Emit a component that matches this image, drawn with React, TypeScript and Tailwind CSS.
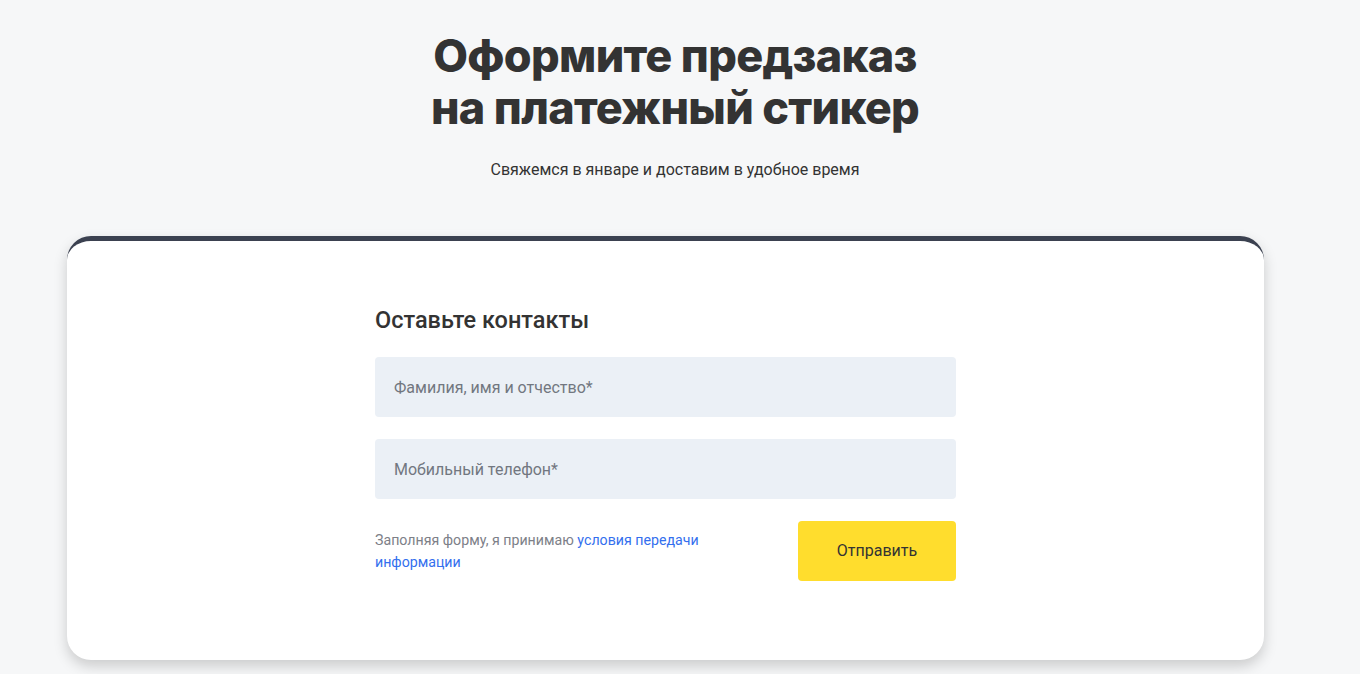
export default function App() {
  return (
    <div className="min-h-screen bg-[#f6f7f8] font-['Roboto','Noto_Sans',sans-serif] text-[#333333]">
      <div className="flex flex-col items-center pt-[30px] pr-[10px]">
        <h1 className="text-center font-['Inter','Noto_Sans',sans-serif] text-[45px] font-extrabold leading-[52px] tracking-[-0.7px] text-[#333333]">
          Оформите предзаказ
          <br />
          на платежный стикер
        </h1>
        <p className="mt-[24px] text-[16px] leading-[24px] text-[#333333]">
          Свяжемся в январе и доставим в удобное время
        </p>
      </div>

      <div className="ml-[67px] mt-[54px] w-[1197px] rounded-[24px] border-t-[5px] border-[#3b4150] bg-white shadow-[0_6px_14px_rgba(0,0,0,0.18)]">
        <div className="mx-auto w-[581px] pt-[65px] pb-[79px]">
          <h2 className="text-[23.5px] font-medium leading-[29px] text-[#333333]">Оставьте контакты</h2>

          <div className="mt-[22px] flex flex-col gap-[22px]">
            <input
              placeholder="Фамилия, имя и отчество*"
              className="h-[60px] w-full rounded-[4px] bg-[#ebf0f6] px-[19px] text-[16px] text-[#333333] outline-none placeholder:text-[#727780]"
            />
            <input
              placeholder="Мобильный телефон*"
              className="h-[60px] w-full rounded-[4px] bg-[#ebf0f6] px-[19px] text-[16px] text-[#333333] outline-none placeholder:text-[#727780]"
            />
          </div>

          <div className="mt-[22px] flex items-center justify-between">
            <div className="text-[14.2px] leading-[22px] text-[#7d8088]">
              <div>
                Заполняя форму, я принимаю{' '}
                <a href="#" className="text-[#336fee]">
                  условия передачи
                </a>
              </div>
              <a href="#" className="block text-[#336fee]">
                информации
              </a>
            </div>
            <button className="h-[60px] w-[158px] rounded-[4px] bg-[#ffdd2d] text-[16px] text-[#333333]">
              Отправить
            </button>
          </div>
        </div>
      </div>
    </div>
  );
}
